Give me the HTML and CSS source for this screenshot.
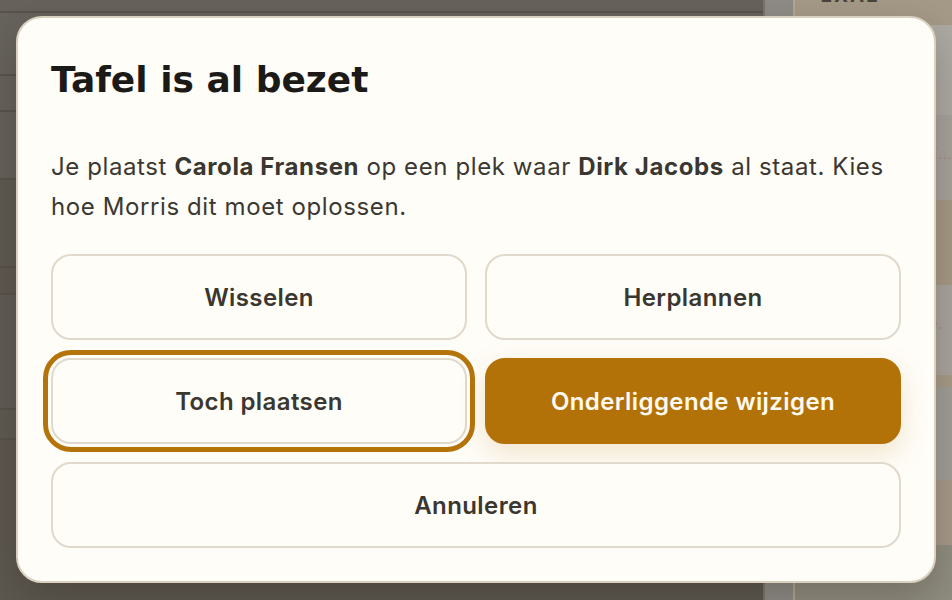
FILE: index.html
```html
<!DOCTYPE html>
<html lang="nl">
<head>
<meta charset="utf-8">
<title>Tafel is al bezet</title>
<link rel="stylesheet" href="styles.css">
</head>
<body>
<div class="app">
  <div class="main">
    <div class="row r1"></div>
    <div class="row r2"></div>
    <div class="row r3"></div>
    <div class="row r4"></div>
    <div class="row r5"></div>
    <div class="row r6"></div>
    <div class="row r7"></div>
    <div class="row r8"></div>
    <div class="row r9"></div>
  </div>
  <div class="strip"></div>
  <div class="side">
    <div class="cell c1"><span class="lane">EXAE</span></div>
    <div class="cell c2"></div>
    <div class="cell c3"><span class="note">E...</span></div>
    <div class="cell c4"></div>
    <div class="cell c5"><span class="note">e.</span></div>
    <div class="cell c6"></div>
    <div class="cell c7"></div>
    <div class="cell c8"></div>
    <div class="cell c9"></div>
  </div>
</div>

<div class="dialog" role="dialog" aria-labelledby="dlg-title">
  <h1 id="dlg-title" class="title">Tafel is al bezet</h1>
  <p class="message">Je plaatst <strong>Carola Fransen</strong> op een plek waar <strong>Dirk Jacobs</strong> al staat. Kies hoe Morris dit moet oplossen.</p>
  <div class="actions">
    <button class="btn">Wisselen</button>
    <button class="btn">Herplannen</button>
    <button class="btn focused">Toch plaatsen</button>
    <button class="btn primary">Onderliggende wijzigen</button>
    <button class="btn wide">Annuleren</button>
  </div>
</div>
</body>
</html>
```

FILE: styles.css
```css
* { box-sizing: border-box; }

html, body {
  margin: 0;
  height: 100%;
}

body {
  width: 952px;
  height: 600px;
  overflow: hidden;
  position: relative;
  font-family: "Inter", "DejaVu Sans", sans-serif;
  background: #625d56;
}

/* dimmed application underneath */
.app {
  display: flex;
  height: 600px;
}

.main {
  width: 768px;
  display: flex;
  flex-direction: column;
  background: #645f58;
}

.row {
  border-bottom: 2px solid #58534c;
}
.r1 { height: 13px; background: #67625c; }
.r2 { height: 63px; background: #67635d; }
.r3 { height: 36px; background: #66625c; }
.r4 { height: 68px; background: #65615b; }
.r5 { height: 88px; background: #5f5a52; }
.r6 { height: 27px; background: #5f5951; }
.r7 { height: 115px; background: #615c55; }
.r8 { height: 30px; background: #5f5a52; }
.r9 { flex: 1; background: #5d5850; border-bottom: 0; }

.strip {
  width: 30px;
  background: #8f8c87;
  border-left: 2px solid #7a766f;
}

.side {
  flex: 1;
  display: flex;
  flex-direction: column;
  background: #a39783;
  border-left: 2px solid #b4a98f;
}

.cell { position: relative; }
.c1 { height: 25px; background: #a59a87; }
.c2 { height: 90px; background: #adaaa3; }
.c3 { height: 85px; background: #a7a39c; }
.c4 { height: 85px; background: #a69a86; }
.c5 { height: 90px; background: #a9a59e; }
.c6 { height: 12px; background: #a79c88; }
.c7 { height: 93px; background: #a19e99; }
.c8 { height: 65px; background: #a7998a; }
.c9 { flex: 1; background: #908e80; }

.lane {
  display: block;
  margin: -14px 0 0 26px;
  font-size: 19px;
  line-height: 20px;
  font-weight: 700;
  letter-spacing: 2px;
  color: #4a4438;
}

.note {
  display: block;
  padding: 28px 0 0 134px;
  font-size: 16px;
  color: #b08c80;
}

/* dialog */
.dialog {
  position: absolute;
  left: 16px;
  top: 16px;
  width: 920px;
  height: 567px;
  padding: 30px 33px 34px 33px;
  background: #fffdf8;
  border: 2px solid #d9d0bf;
  border-radius: 26px;
  box-shadow: 0 16px 40px rgba(30, 24, 14, 0.25);
}

.title {
  margin: 0;
  font-family: "DejaVu Sans", sans-serif;
  font-weight: 700;
  font-size: 36px;
  line-height: 64px;
  letter-spacing: 0;
  color: #1c1a16;
}

.message {
  margin: 35px 0 27px 0;
  font-size: 24px;
  line-height: 40px;
  letter-spacing: 0.6px;
  color: #3b3832;
}

.message strong {
  font-weight: 700;
  color: #3a3630;
}

.actions {
  display: grid;
  grid-template-columns: 1fr 1fr;
  gap: 18px;
}

.btn {
  height: 86px;
  border: 2px solid #e0d9cc;
  border-radius: 20px;
  background: #fffdf8;
  font-family: "Inter", "DejaVu Sans", sans-serif;
  font-size: 24px;
  font-weight: 600;
  letter-spacing: 0.4px;
  color: #3a3630;
  cursor: pointer;
}

.btn.focused {
  outline: 5px solid #b5740a;
  outline-offset: 3px;
}

.btn.primary {
  background: #b37208;
  border-color: #b37208;
  color: #fffaf0;
  box-shadow: 0 10px 28px rgba(179, 114, 8, 0.18);
}

.btn.wide {
  grid-column: 1 / span 2;
}
```
